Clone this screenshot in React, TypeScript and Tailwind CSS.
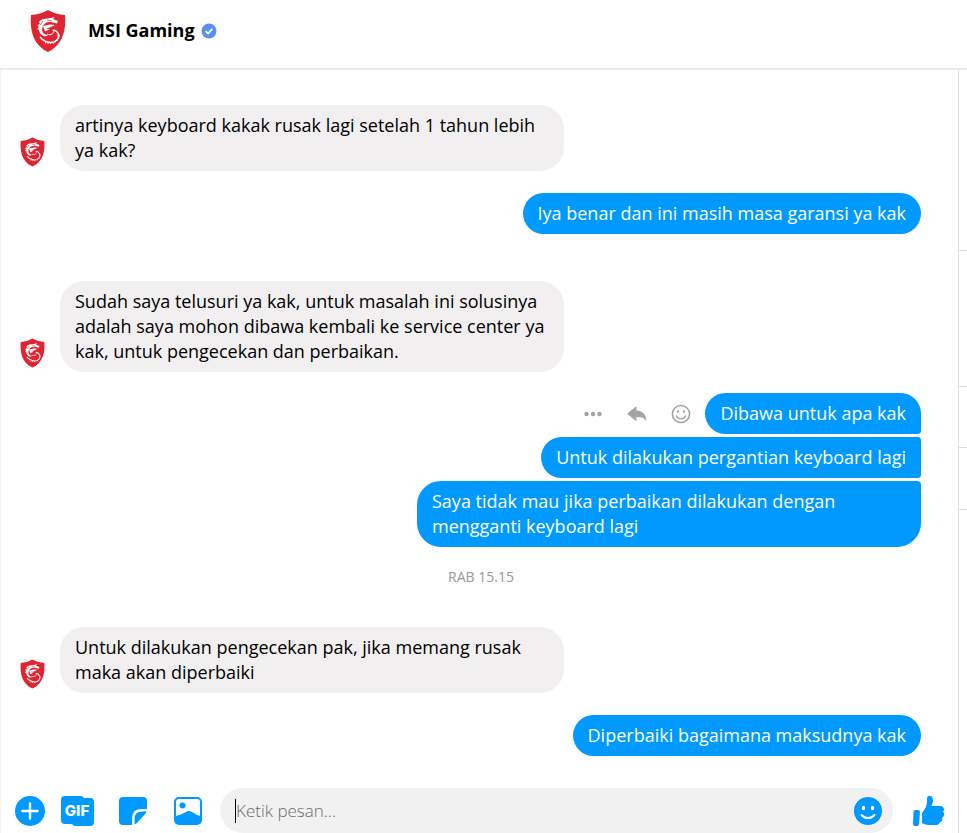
import React from 'react';

interface BubbleProps {
  children: React.ReactNode;
  className?: string;
}

const Logo: React.FC<{ className?: string }> = ({ className }) => (
  <svg viewBox="0 0 36 42" className={className} role="img" aria-label="MSI Gaming">
    <path d="M18 0C23 3 29 4.500 35 5C36 19 34 34 18 42C2 34 0 19 1 5C7 4.500 13 3 18 0Z" fill="#df2531" />
    <path
      d="M9 12C11 9 14 8.500 18 8.500L25 7L23 9L28 11L27 13.500L23 12.500C18 11 14 13 12.500 17C11 22 14 25 18 25C15 28 9 25 9 19L7 20L9 16L7 16L10 13.500Z"
      fill="#fff"
    />
    <path d="M13 16L20 14.500L25 15L21 17L16 18.500L20 19L15 21.500Z" fill="#fff" />
    <path d="M17 24C21 26 25 23 23 20" fill="none" stroke="#fff" strokeWidth="1" />
    <path d="M23 20C29 21 30 27 27 30C23 34 15 33 10 27" fill="none" stroke="#fff" strokeWidth="1.500" />
    <path d="M29 25C29 31 22 36 14 32" fill="none" stroke="#fff" strokeWidth="1.500" strokeDasharray="1 1.500" />
    <path d="M13 11L10 15M17 10L22 11" fill="none" stroke="#df2531" strokeWidth=".7" />
  </svg>
);

const Received: React.FC<BubbleProps> = ({ children, className = '' }) => (
  <div className={`flex items-end ${className}`}>
    <Logo className="w-[25px] h-[30px] mr-[15px] mb-1 shrink-0" />
    <p className="max-w-[504px] rounded-[24px] bg-[#f1eff0] px-[15px] py-2 text-black">{children}</p>
  </div>
);

const Sent: React.FC<BubbleProps> = ({ children, className = '' }) => (
  <p className={`max-w-[504px] bg-[#0099ff] px-[15px] py-2 text-white ${className}`}>{children}</p>
);

const Header = () => (
  <header className="flex h-[70px] shrink-0 items-center border-b-2 border-[#ebebeb] pl-[30px] pb-[7px]">
    <Logo className="w-[36px] h-[42px]" />
    <h1 className="ml-[22px] font-bold text-black">MSI Gaming</h1>
    <svg viewBox="0 0 16 16" className="ml-[6px] w-4 h-4" role="img" aria-label="Verified">
      <circle cx="8" cy="8" r="7.500" fill="#5890f0" />
      <path d="M4.500 8.200L7 10.500L11.300 5.800" fill="none" stroke="#fff" strokeWidth="1.800" />
    </svg>
  </header>
);

const MessageActions = () => (
  <div className="mr-[14px] flex items-center gap-6 text-[#a3a3a3]">
    <button aria-label="More">
      <svg viewBox="0 0 20 20" className="w-5 h-5" fill="currentColor">
        <circle cx="3.500" cy="10" r="2.200" />
        <circle cx="10" cy="10" r="2.200" />
        <circle cx="16.500" cy="10" r="2.200" />
      </svg>
    </button>
    <button aria-label="Reply">
      <svg viewBox="0 0 20 20" className="w-5 h-5" fill="currentColor">
        <path d="M9.500 3.200V6.500C15 6.500 19 10 19.500 17C17 13.500 14 12.800 9.500 13V16.300C9.500 17 8.800 17 8.300 16.600L1 10.600C.4 10 .4 9.500 1 9L8.300 3C8.800 2.600 9.500 2.600 9.500 3.200Z" />
      </svg>
    </button>
    <button aria-label="React">
      <svg viewBox="0 0 20 20" className="w-5 h-5" fill="none" stroke="currentColor" strokeWidth="1.500">
        <circle cx="10" cy="10" r="8.600" />
        <path d="M5.500 12C7 15.500 13 15.500 14.500 12" strokeLinecap="round" />
        <circle cx="7" cy="7.500" r="1.200" fill="currentColor" stroke="none" />
        <circle cx="13" cy="7.500" r="1.200" fill="currentColor" stroke="none" />
      </svg>
    </button>
  </div>
);

const Composer = () => (
  <form className="flex shrink-0 items-center pl-[14px] pr-[14px] pt-3 text-[#0099ff]">
    <button type="button" aria-label="Add">
      <svg viewBox="0 0 30 30" className="w-[30px] h-[30px]">
        <circle cx="15" cy="15" r="15" fill="currentColor" />
        <path d="M15 7.500V22.500M7.500 15H22.500" stroke="#fff" strokeWidth="2.400" strokeLinecap="round" />
      </svg>
    </button>
    <button type="button" aria-label="GIF" className="ml-4">
      <svg viewBox="0 0 33 30" className="w-[33px] h-[30px]">
        <path d="M4 0H19Q22 0 23 2H29Q33 2 33 6V26Q33 30 29 30H15Q12 30 11 28H4Q0 28 0 24V4Q0 0 4 0Z" fill="currentColor" />
        <text x="16" y="20" textAnchor="middle" fill="#fff" fontFamily="Inter, sans-serif" fontSize="15" fontWeight="800">GIF</text>
      </svg>
    </button>
    <button type="button" aria-label="Stickers" className="ml-[25px]">
      <svg viewBox="0 0 28 28" className="w-7 h-7" fill="currentColor">
        <path d="M4 0H24Q28 0 28 4V12H23Q13 12 13 21V28H4Q0 28 0 24V4Q0 0 4 0Z" />
        <path d="M15.500 27V22Q15.500 14.500 23 14.500H27.500Q27.500 15.500 26.500 16.500L18 26Q17 27 15.500 27Z" />
      </svg>
    </button>
    <button type="button" aria-label="Photos" className="ml-[27px]">
      <svg viewBox="0 0 28 28" className="w-7 h-7" fill="currentColor">
        <rect x="1" y="1" width="26" height="26" rx="4" fill="none" stroke="currentColor" strokeWidth="2" />
        <circle cx="8.500" cy="8.500" r="3" />
        <path d="M1 19Q7 18 12 15Q15 13 18 15Q22 18 27 19V24Q27 27 24 27H4Q1 27 1 24Z" />
      </svg>
    </button>
    <div className="ml-[18px] flex h-[45px] min-w-0 flex-1 items-center rounded-full bg-[#f1f1f1] pl-[15px] pr-[11px]">
      <span className="h-6 w-px bg-black" />
      <input
        type="text"
        aria-label="Ketik pesan"
        placeholder="Ketik pesan..."
        className="min-w-0 flex-1 bg-transparent text-[17px] font-light text-black outline-none placeholder:text-[#6b6b6b]"
      />
      <button type="button" aria-label="Emoji">
        <svg viewBox="0 0 28 28" className="w-7 h-7">
          <circle cx="14" cy="14" r="14" fill="currentColor" />
          <ellipse cx="9.500" cy="11" rx="1.700" ry="2.300" fill="#fff" />
          <ellipse cx="18.500" cy="11" rx="1.700" ry="2.300" fill="#fff" />
          <path d="M7.500 18C11 22 17 22 20.500 18" fill="none" stroke="#fff" strokeWidth="2" strokeLinecap="round" />
        </svg>
      </button>
    </div>
    <button type="button" aria-label="Like" className="ml-5">
      <svg viewBox="0 0 31 32" className="w-[31px] h-8" fill="currentColor">
        <path d="M2.500 15H5Q7 15 7 17L6 29Q6 31 4 31H2Q0 31 0 29L.5 17Q.5 15 2.500 15Z" />
        <path d="M9 18C12 14 14.500 11 14 4C14 -1 20 0 20 5C20 8 19 9 18.500 11H27C31 11 32 15 30 16.500C32 19 31 22 29 22.500C30 25 29 27 27 27C26 30 24 30 22 30H16C13 30 11 29 9 28Z" />
      </svg>
    </button>
  </form>
);

const Sidebar = () => (
  <aside className="w-[9px] shrink-0 border-l border-[#dedede]">
    <div className="h-[181px] border-b border-[#dedede]" />
    <div className="h-[136px] border-b border-[#dedede]" />
    <div className="h-[61px] border-b border-[#dedede]" />
    <div className="h-[62px] border-b border-[#dedede]" />
  </aside>
);

const App = () => (
  <div className="flex min-h-screen flex-col bg-white font-['Open_Sans',sans-serif] text-lg leading-[25px]">
    <Header />
    <div className="flex flex-1">
      <div className="flex min-w-0 flex-1 flex-col justify-between border-l border-[#f3f3f3]">
        <main className="flex flex-col pt-[35px] pr-[37px] pl-[19px]">
          <Received>artinya keyboard kakak rusak lagi setelah 1 tahun lebih ya kak?</Received>
          <Sent className="mt-[22px] self-end rounded-[24px]">Iya benar dan ini masih masa garansi ya kak</Sent>
          <Received className="mt-[47px]">
            Sudah saya telusuri ya kak, untuk masalah ini solusinya adalah saya mohon dibawa kembali ke service center ya
            kak, untuk pengecekan dan perbaikan.
          </Received>
          <div className="mt-[21px] flex flex-col items-end gap-[3px]">
            <div className="flex items-center">
              <MessageActions />
              <Sent className="rounded-[24px] rounded-br-[4px]">Dibawa untuk apa kak</Sent>
            </div>
            <Sent className="rounded-l-[24px] rounded-r-[4px]">Untuk dilakukan pergantian keyboard lagi</Sent>
            <Sent className="rounded-[24px] rounded-tr-[4px]">
              Saya tidak mau jika perbaikan dilakukan dengan mengganti keyboard lagi
            </Sent>
          </div>
          <time className="mt-[17px] pl-[21px] text-center text-sm leading-[25px] text-[#999999]">RAB 15.15</time>
          <Received className="mt-[38px]">Untuk dilakukan pengecekan pak, jika memang rusak maka akan diperbaiki</Received>
          <Sent className="mt-[22px] self-end rounded-[24px]">Diperbaiki bagaimana maksudnya kak</Sent>
        </main>
        <Composer />
      </div>
      <Sidebar />
    </div>
  </div>
);

export default App;
